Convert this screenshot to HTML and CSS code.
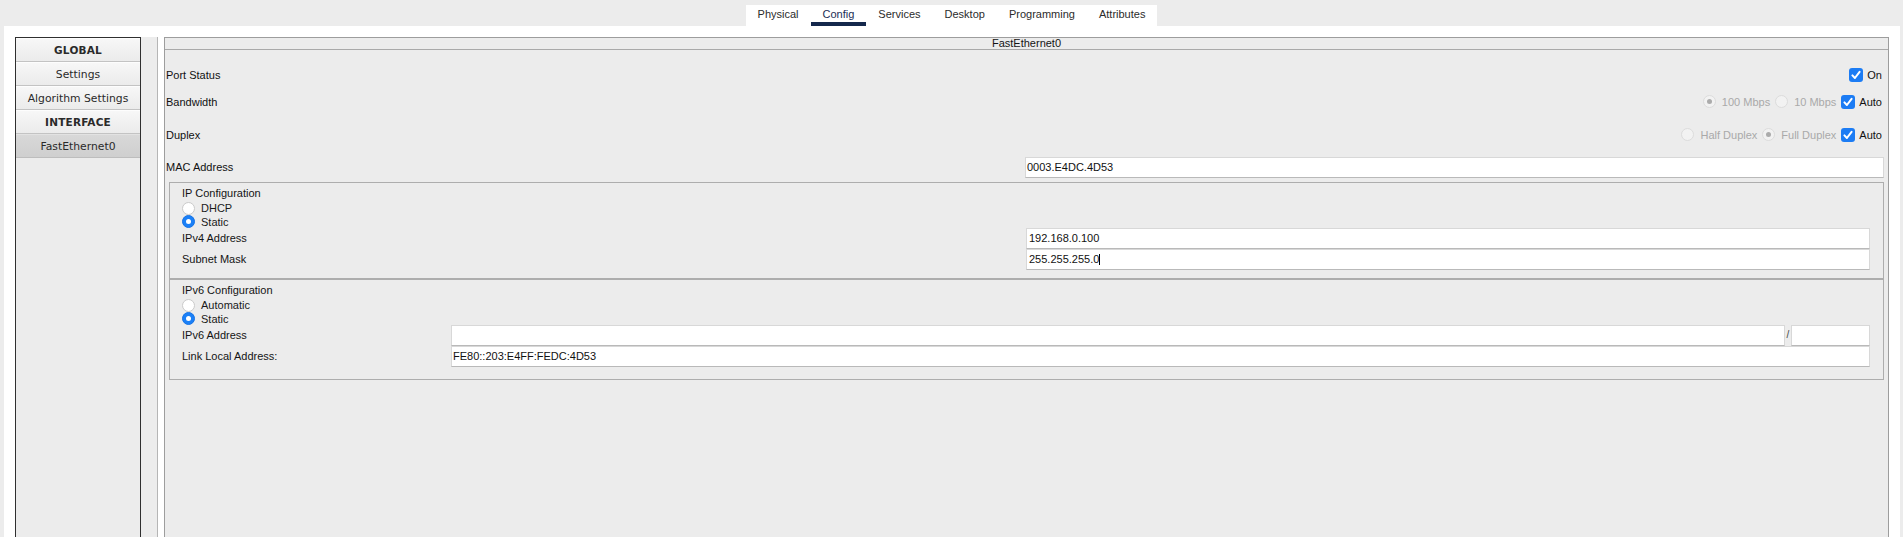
FILE: index.html
```html
<!DOCTYPE html>
<html>
<head>
<meta charset="utf-8">
<link rel="stylesheet" href="styles.css">
</head>
<body>
<div class="tabs">
  <div class="tabbar">
    <span class="tab">Physical</span>
    <span class="tab active">Config</span>
    <span class="tab">Services</span>
    <span class="tab">Desktop</span>
    <span class="tab">Programming</span>
    <span class="tab">Attributes</span>
  </div>
</div>
<div class="frame">
  <div class="side-pane">
    <div class="side-list">
      <div class="side-item head">GLOBAL</div>
      <div class="side-item">Settings</div>
      <div class="side-item">Algorithm Settings</div>
      <div class="side-item head">INTERFACE</div>
      <div class="side-item selected">FastEthernet0</div>
    </div>
  </div>
  <div class="main">
    <div class="main-title">FastEthernet0</div>
    <div class="row row-port">
      <span class="label">Port Status</span>
      <div class="opts">
        <span class="opt chk-opt"><span class="check"><svg width="14" height="14" viewBox="0 0 14 14"><path d="M3.4 7.4 L5.9 10 L10.6 3.9" fill="none" stroke="#fff" stroke-width="2" stroke-linecap="round" stroke-linejoin="round"/></svg></span>On</span>
      </div>
    </div>
    <div class="row row-bw">
      <span class="label">Bandwidth</span>
      <div class="opts">
        <span class="opt dis"><span class="radio dis on"></span>100 Mbps</span>
        <span class="opt dis"><span class="radio dis"></span>10 Mbps</span>
        <span class="opt chk-opt"><span class="check"><svg width="14" height="14" viewBox="0 0 14 14"><path d="M3.4 7.4 L5.9 10 L10.6 3.9" fill="none" stroke="#fff" stroke-width="2" stroke-linecap="round" stroke-linejoin="round"/></svg></span>Auto</span>
      </div>
    </div>
    <div class="row row-dup">
      <span class="label">Duplex</span>
      <div class="opts">
        <span class="opt dis"><span class="radio dis"></span>Half Duplex</span>
        <span class="opt dis"><span class="radio dis on"></span>Full Duplex</span>
        <span class="opt chk-opt"><span class="check"><svg width="14" height="14" viewBox="0 0 14 14"><path d="M3.4 7.4 L5.9 10 L10.6 3.9" fill="none" stroke="#fff" stroke-width="2" stroke-linecap="round" stroke-linejoin="round"/></svg></span>Auto</span>
      </div>
    </div>
    <div class="row-mac">
      <span class="label">MAC Address</span>
      <div class="field">0003.E4DC.4D53</div>
    </div>

    <div class="group g4">
      <div class="g-title">IP Configuration</div>
      <div class="radio-row"><span class="radio"></span>DHCP</div>
      <div class="radio-row short"><span class="radio sel"></span>Static</div>
      <div class="in-row"><span class="in-label">IPv4 Address</span><div class="field">192.168.0.100</div></div>
      <div class="in-row"><span class="in-label">Subnet Mask</span><div class="field">255.255.255.0<span class="caret"></span></div></div>
    </div>

    <div class="group g6">
      <div class="g-title">IPv6 Configuration</div>
      <div class="radio-row"><span class="radio"></span>Automatic</div>
      <div class="radio-row short"><span class="radio sel"></span>Static</div>
      <div class="in-row"><span class="in-label">IPv6 Address</span><div class="v6-line"><div class="field grow"></div><span class="slash">/</span><div class="field prefix"></div></div></div>
      <div class="in-row"><span class="in-label">Link Local Address:</span><div class="field">FE80::203:E4FF:FEDC:4D53</div></div>
    </div>
  </div>
</div>
</body>
</html>
```
FILE: styles.css
```css
html, body {
  margin: 0;
  height: 100%;
  overflow: hidden;
}
body {
  background: #ececec;
  font-family: "Liberation Sans", Arial, sans-serif;
  font-size: 11px;
  color: #141414;
}

/* tabs */
.tabs {
  height: 26px;
  display: flex;
  justify-content: center;
}
.tabbar {
  margin-top: 5px;
  height: 21px;
  background: #fff;
  display: flex;
}
.tab {
  box-sizing: border-box;
  height: 21px;
  padding: 1px 12px 0;
  line-height: 17px;
  border-bottom: 4px solid transparent;
  color: #2b2b2b;
  white-space: nowrap;
}
.tab.active {
  border-bottom-color: #14284c;
  color: #1b2d55;
}

/* white frame */
.frame {
  margin: 0 3px 0 4px;
  background: #fff;
  padding: 11px 11px 0;
  display: flex;
  gap: 6px;
  height: 560px;
}

/* sidebar */
.side-pane {
  width: 143px;
  box-sizing: border-box;
  border-right: 1px solid #b5b5b5;
  background: #ececec;
}
.side-list {
  width: 126px;
  height: 100%;
  box-sizing: border-box;
  border: 1px solid #2f2f2f;
  background: #ececec;
}
.side-item {
  height: 24px;
  box-sizing: border-box;
  line-height: 23px;
  text-align: center;
  font-family: "DejaVu Sans", Verdana, sans-serif;
  font-size: 10.8px;
  color: #2a2a2a;
  background: linear-gradient(#f7f7f7, #ebebeb);
  border-top: 1px solid #fdfdfd;
  border-bottom: 1px solid #c3c3c3;
  white-space: nowrap;
}
.side-item.head {
  font-weight: bold;
  font-size: 10.5px;
  letter-spacing: 0.2px;
}
.side-item.selected {
  background: linear-gradient(#d8d8d8, #cfcfcf);
  border-top-color: #e2e2e2;
  border-bottom-color: #bdbdbd;
}

/* main panel */
.main {
  flex: 1;
  border: 1px solid #9d9d9d;
  background: #ececec;
}
.main-title {
  height: 11px;
  line-height: 11px;
  text-align: center;
  border-bottom: 1px solid #a9a9a9;
  margin-bottom: 12px;
}
.row {
  display: flex;
  align-items: center;
  justify-content: space-between;
  padding: 0 6px 0 1px;
}
.row-port { height: 26px; }
.row-bw { height: 27px; }
.row-dup { height: 39px; }
.row-mac {
  height: 26px;
  display: grid;
  grid-template-columns: 1fr 1fr;
  align-items: center;
  padding: 0 4px 0 1px;
  margin-bottom: 2px;
}
.label {
  color: #111;
}
.opts {
  display: flex;
  align-items: center;
  gap: 5px;
}
.opt {
  display: flex;
  align-items: center;
  gap: 6px;
  white-space: nowrap;
}
.opt.chk-opt { gap: 4px; color: #111; }
.opt.dis { color: #a9a9a9; }

.check {
  width: 14px;
  height: 14px;
  border-radius: 3px;
  background: #1c7cf4;
  display: block;
}
.check svg { display: block; }

.radio {
  width: 13px;
  height: 13px;
  box-sizing: border-box;
  border-radius: 50%;
  border: 1px solid #cacaca;
  background: #fff;
  display: flex;
  align-items: center;
  justify-content: center;
  flex: none;
}
.radio.sel {
  background: #1b80f7;
  border-color: #1573e6;
}
.radio.sel::after {
  content: "";
  width: 5px;
  height: 5px;
  border-radius: 50%;
  background: #fff;
}
.radio.dis {
  background: #f2f2f2;
  border-color: #dcdcdc;
}
.radio.dis.on::after {
  content: "";
  width: 5px;
  height: 5px;
  border-radius: 50%;
  background: #ababab;
}

/* inputs */
.field {
  height: 21px;
  box-sizing: border-box;
  background: #fff;
  border: 1px solid #d8d8d8;
  border-bottom-color: #b9b9b9;
  padding: 0 1px;
  line-height: 19px;
  color: #111;
  white-space: nowrap;
  overflow: hidden;
}
.caret {
  display: inline-block;
  width: 1px;
  height: 11px;
  background: #000;
  vertical-align: -2px;
}

/* groups */
.group {
  margin: 0 4px;
  border: 1px solid #adadad;
  padding: 3px 13px 8px 12px;
}
.group.g6 { padding-bottom: 12px; }
.g-title {
  height: 15px;
  line-height: 15px;
  color: #141414;
}
.radio-row {
  display: flex;
  align-items: center;
  gap: 6px;
  height: 14px;
  color: #1a1a1a;
}
.radio-row.short { height: 13px; }
.in-row {
  display: grid;
  grid-template-columns: 1fr 1fr;
  align-items: center;
  height: 21px;
}
.g6 .in-row { grid-template-columns: 269px 1fr; }
.in-label {
  padding-bottom: 2px;
  color: #141414;
}
.g4 .field { padding-left: 2px; }
.v6-line {
  display: flex;
  align-items: center;
}
.field.grow { flex: 1; }
.slash {
  width: 6px;
  text-align: center;
  color: #444;
  font-size: 10px;
  padding-bottom: 3px;
}
.field.prefix { width: 79px; }
```
